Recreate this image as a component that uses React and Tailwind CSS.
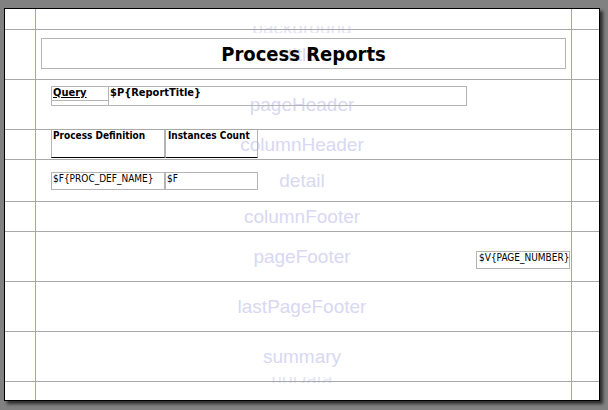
import React from 'react';

const label = 'font-["Liberation_Sans",Arial,sans-serif] text-[19px] text-[#d8d8f2] leading-none';
const cell = 'font-["DejaVu_Sans_Condensed","DejaVu_Sans",sans-serif] text-black whitespace-nowrap';

// one band of the report page, with its faint name centred behind the elements
const Band = ({ name, h, last, children }) => (
  <div className={`relative ${h} ${last ? '' : 'border-b border-[#a8a8a8]'}`}>
    {name && (
      <div className="absolute inset-0 flex items-center justify-center pointer-events-none">
        <span className={label}>{name}</span>
      </div>
    )}
    <div className="relative">{children}</div>
  </div>
);

const App = () => {
  return (
    <div className="w-[608px] h-[410px] bg-[#818181] pl-[4px] pt-[8px] overflow-hidden">
      <div className="relative w-[596px] h-[393px] bg-white border border-black shadow-[3px_3px_3px_rgba(0,0,0,0.65)]">
        {/* half-hidden labels of the empty bands */}
        <div className="absolute left-0 right-0 top-[17px] h-[7px] overflow-hidden flex justify-center pointer-events-none">
          <div className={`${label} text-[#e4e4f6] -mt-[8px]`}>background</div>
        </div>
        <div className="absolute left-0 right-0 top-[368px] h-[6px] overflow-hidden flex justify-center pointer-events-none">
          <div className={`${label} text-[#e4e4f6] -mt-[8px]`}>noData</div>
        </div>

        <Band h="h-[21px]" />

        <Band name="title" h="h-[50px]">
          <div className="pt-[8px] pl-[36px]">
            <div className={`${cell} w-[525px] h-[31px] border border-[#b4b4b4] flex items-center justify-center font-bold text-[20px] leading-none`}>
              Process Reports
            </div>
          </div>
        </Band>

        <Band name="pageHeader" h="h-[50px]">
          <div className="pt-[6px] pl-[46px] flex">
            <div className="w-[58px] h-[20px] border border-[#b4b4b4]">
              <div className={`${cell} h-[14px] border-b border-[#b4b4b4] pl-[1px] font-bold text-[11px] leading-[11px] underline`}>
                Query
              </div>
            </div>
            <div className={`${cell} w-[358px] h-[20px] border border-l-0 border-[#b4b4b4] pl-[1px] font-bold text-[11px] leading-[11px]`}>
              $P&#123;ReportTitle&#125;
            </div>
          </div>
        </Band>

        <Band name="columnHeader" h="h-[30px]">
          <div className="pl-[46px] flex">
            <div className={`${cell} w-[115px] h-[28px] border-l border-r-2 border-[#b4b4b4] border-b border-b-black pl-[1px] pt-[1px] font-bold text-[10px] leading-[10px]`}>
              Process Definition
            </div>
            <div className={`${cell} w-[92px] h-[28px] border-r border-[#b4b4b4] border-b border-b-black pl-[2px] pt-[1px] font-bold text-[10px] leading-[10px]`}>
              Instances Count
            </div>
          </div>
        </Band>

        <Band name="detail" h="h-[42px]">
          <div className="pt-[12px] pl-[46px] flex">
            <div className={`${cell} w-[115px] h-[18px] border border-r-2 border-[#b4b4b4] pl-[1px] pt-[1px] text-[10px] leading-[10px]`}>
              $F&#123;PROC_DEF_NAME&#125;
            </div>
            <div className={`${cell} w-[92px] h-[18px] border border-l-0 border-[#b4b4b4] pl-[1px] pt-[1px] text-[10px] leading-[10px]`}>
              $F
            </div>
          </div>
        </Band>

        <Band name="columnFooter" h="h-[30px]" />

        <Band name="pageFooter" h="h-[50px]">
          <div className="pt-[19px] pl-[471px]">
            <div className={`${cell} w-[94px] h-[18px] border border-[#b4b4b4] pl-[2px] pt-[1px] overflow-hidden text-[10px] leading-[10px]`}>
              $V&#123;PAGE_NUMBER&#125;
            </div>
          </div>
        </Band>

        <Band name="lastPageFooter" h="h-[50px]" />
        <Band name="summary" h="h-[50px]" />
        <Band h="h-[18px]" last />

        {/* margin guides */}
        <div className="absolute top-0 bottom-0 left-[30px] w-px bg-[#9e9ee8]" />
        <div className="absolute top-0 bottom-0 left-[566px] w-px bg-[#9e9ee8]" />
      </div>
    </div>
  );
};

export default App;
